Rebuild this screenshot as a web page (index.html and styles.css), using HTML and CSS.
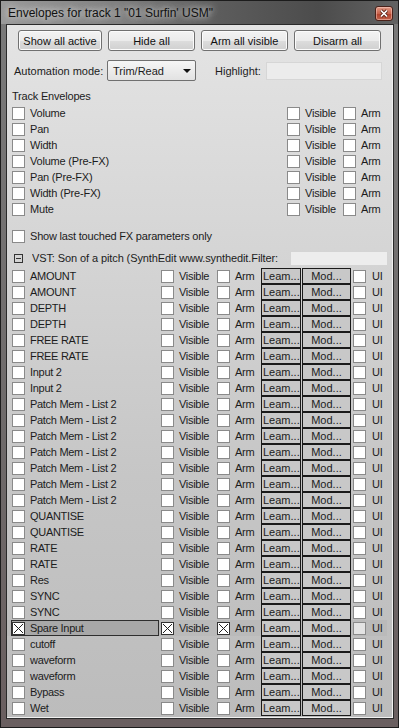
FILE: index.html
```html
<!DOCTYPE html>
<html lang="en">
<head>
    <meta charset="UTF-8">
    <title>Envelopes for track 1</title>
    <link rel="stylesheet" href="styles.css">
</head>
<body>
<div class="window">
    <div class="titlebar">
        <span class="title">Envelopes for track 1 "01 Surfin' USM"</span>
        <span class="close">
            <svg width="10" height="9" viewBox="0 0 10 9"><path d="M2 1.5 L8 7.5 M8 1.5 L2 7.5" stroke="#5a2418" stroke-width="3.2"/><path d="M2 1.5 L8 7.5 M8 1.5 L2 7.5" stroke="#fff" stroke-width="1.7"/></svg>
        </span>
    </div>
    <div class="client">
        <div class="btn-row">
            <button class="btn w84">Show all active</button>
            <button class="btn">Hide all</button>
            <button class="btn">Arm all visible</button>
            <button class="btn">Disarm all</button>
        </div>

        <div class="mode-row">
            <span class="mode-label">Automation mode:</span>
            <div class="select">Trim/Read<span class="arrow"></span></div>
            <span class="hl-label">Highlight:</span>
            <div class="hl-input"></div>
        </div>

        <div class="section-label">Track Envelopes</div>
        <div class="env-list">
            <div class="env-row"><span class="chk"><i class="cb"></i>Volume</span><span class="chk"><i class="cb"></i>Visible</span><span class="chk"><i class="cb"></i>Arm</span></div>
            <div class="env-row"><span class="chk"><i class="cb"></i>Pan</span><span class="chk"><i class="cb"></i>Visible</span><span class="chk"><i class="cb"></i>Arm</span></div>
            <div class="env-row"><span class="chk"><i class="cb"></i>Width</span><span class="chk"><i class="cb"></i>Visible</span><span class="chk"><i class="cb"></i>Arm</span></div>
            <div class="env-row"><span class="chk"><i class="cb"></i>Volume (Pre-FX)</span><span class="chk"><i class="cb"></i>Visible</span><span class="chk"><i class="cb"></i>Arm</span></div>
            <div class="env-row"><span class="chk"><i class="cb"></i>Pan (Pre-FX)</span><span class="chk"><i class="cb"></i>Visible</span><span class="chk"><i class="cb"></i>Arm</span></div>
            <div class="env-row"><span class="chk"><i class="cb"></i>Width (Pre-FX)</span><span class="chk"><i class="cb"></i>Visible</span><span class="chk"><i class="cb"></i>Arm</span></div>
            <div class="env-row"><span class="chk"><i class="cb"></i>Mute</span><span class="chk"><i class="cb"></i>Visible</span><span class="chk"><i class="cb"></i>Arm</span></div>
        </div>

        <div class="show-last"><span class="chk"><i class="cb"></i>Show last touched FX parameters only</span></div>

        <div class="vst-head">
            <span class="collapse"></span>
            <span class="vst-name">VST: Son of a pitch (SynthEdit www.synthedit.Filter:</span>
            <div class="filter"></div>
        </div>

        <div class="param-list">
            <div class="prow"><span class="pname"><i class="cb"></i>AMOUNT</span><span class="chk"><i class="cb"></i>Visible</span><span class="chk"><i class="cb"></i>Arm</span><span class="learn">Leam...</span><span class="mod">Mod...</span><span class="chk"><i class="cb"></i>UI</span></div>
            <div class="prow"><span class="pname"><i class="cb"></i>AMOUNT</span><span class="chk"><i class="cb"></i>Visible</span><span class="chk"><i class="cb"></i>Arm</span><span class="learn">Leam...</span><span class="mod">Mod...</span><span class="chk"><i class="cb"></i>UI</span></div>
            <div class="prow"><span class="pname"><i class="cb"></i>DEPTH</span><span class="chk"><i class="cb"></i>Visible</span><span class="chk"><i class="cb"></i>Arm</span><span class="learn">Leam...</span><span class="mod">Mod...</span><span class="chk"><i class="cb"></i>UI</span></div>
            <div class="prow"><span class="pname"><i class="cb"></i>DEPTH</span><span class="chk"><i class="cb"></i>Visible</span><span class="chk"><i class="cb"></i>Arm</span><span class="learn">Leam...</span><span class="mod">Mod...</span><span class="chk"><i class="cb"></i>UI</span></div>
            <div class="prow"><span class="pname"><i class="cb"></i>FREE RATE</span><span class="chk"><i class="cb"></i>Visible</span><span class="chk"><i class="cb"></i>Arm</span><span class="learn">Leam...</span><span class="mod">Mod...</span><span class="chk"><i class="cb"></i>UI</span></div>
            <div class="prow"><span class="pname"><i class="cb"></i>FREE RATE</span><span class="chk"><i class="cb"></i>Visible</span><span class="chk"><i class="cb"></i>Arm</span><span class="learn">Leam...</span><span class="mod">Mod...</span><span class="chk"><i class="cb"></i>UI</span></div>
            <div class="prow"><span class="pname"><i class="cb"></i>Input 2</span><span class="chk"><i class="cb"></i>Visible</span><span class="chk"><i class="cb"></i>Arm</span><span class="learn">Leam...</span><span class="mod">Mod...</span><span class="chk"><i class="cb"></i>UI</span></div>
            <div class="prow"><span class="pname"><i class="cb"></i>Input 2</span><span class="chk"><i class="cb"></i>Visible</span><span class="chk"><i class="cb"></i>Arm</span><span class="learn">Leam...</span><span class="mod">Mod...</span><span class="chk"><i class="cb"></i>UI</span></div>
            <div class="prow"><span class="pname"><i class="cb"></i>Patch Mem - List 2</span><span class="chk"><i class="cb"></i>Visible</span><span class="chk"><i class="cb"></i>Arm</span><span class="learn">Leam...</span><span class="mod">Mod...</span><span class="chk"><i class="cb"></i>UI</span></div>
            <div class="prow"><span class="pname"><i class="cb"></i>Patch Mem - List 2</span><span class="chk"><i class="cb"></i>Visible</span><span class="chk"><i class="cb"></i>Arm</span><span class="learn">Leam...</span><span class="mod">Mod...</span><span class="chk"><i class="cb"></i>UI</span></div>
            <div class="prow"><span class="pname"><i class="cb"></i>Patch Mem - List 2</span><span class="chk"><i class="cb"></i>Visible</span><span class="chk"><i class="cb"></i>Arm</span><span class="learn">Leam...</span><span class="mod">Mod...</span><span class="chk"><i class="cb"></i>UI</span></div>
            <div class="prow"><span class="pname"><i class="cb"></i>Patch Mem - List 2</span><span class="chk"><i class="cb"></i>Visible</span><span class="chk"><i class="cb"></i>Arm</span><span class="learn">Leam...</span><span class="mod">Mod...</span><span class="chk"><i class="cb"></i>UI</span></div>
            <div class="prow"><span class="pname"><i class="cb"></i>Patch Mem - List 2</span><span class="chk"><i class="cb"></i>Visible</span><span class="chk"><i class="cb"></i>Arm</span><span class="learn">Leam...</span><span class="mod">Mod...</span><span class="chk"><i class="cb"></i>UI</span></div>
            <div class="prow"><span class="pname"><i class="cb"></i>Patch Mem - List 2</span><span class="chk"><i class="cb"></i>Visible</span><span class="chk"><i class="cb"></i>Arm</span><span class="learn">Leam...</span><span class="mod">Mod...</span><span class="chk"><i class="cb"></i>UI</span></div>
            <div class="prow"><span class="pname"><i class="cb"></i>Patch Mem - List 2</span><span class="chk"><i class="cb"></i>Visible</span><span class="chk"><i class="cb"></i>Arm</span><span class="learn">Leam...</span><span class="mod">Mod...</span><span class="chk"><i class="cb"></i>UI</span></div>
            <div class="prow"><span class="pname"><i class="cb"></i>QUANTISE</span><span class="chk"><i class="cb"></i>Visible</span><span class="chk"><i class="cb"></i>Arm</span><span class="learn">Leam...</span><span class="mod">Mod...</span><span class="chk"><i class="cb"></i>UI</span></div>
            <div class="prow"><span class="pname"><i class="cb"></i>QUANTISE</span><span class="chk"><i class="cb"></i>Visible</span><span class="chk"><i class="cb"></i>Arm</span><span class="learn">Leam...</span><span class="mod">Mod...</span><span class="chk"><i class="cb"></i>UI</span></div>
            <div class="prow"><span class="pname"><i class="cb"></i>RATE</span><span class="chk"><i class="cb"></i>Visible</span><span class="chk"><i class="cb"></i>Arm</span><span class="learn">Leam...</span><span class="mod">Mod...</span><span class="chk"><i class="cb"></i>UI</span></div>
            <div class="prow"><span class="pname"><i class="cb"></i>RATE</span><span class="chk"><i class="cb"></i>Visible</span><span class="chk"><i class="cb"></i>Arm</span><span class="learn">Leam...</span><span class="mod">Mod...</span><span class="chk"><i class="cb"></i>UI</span></div>
            <div class="prow"><span class="pname"><i class="cb"></i>Res</span><span class="chk"><i class="cb"></i>Visible</span><span class="chk"><i class="cb"></i>Arm</span><span class="learn">Leam...</span><span class="mod">Mod...</span><span class="chk"><i class="cb"></i>UI</span></div>
            <div class="prow"><span class="pname"><i class="cb"></i>SYNC</span><span class="chk"><i class="cb"></i>Visible</span><span class="chk"><i class="cb"></i>Arm</span><span class="learn">Leam...</span><span class="mod">Mod...</span><span class="chk"><i class="cb"></i>UI</span></div>
            <div class="prow"><span class="pname"><i class="cb"></i>SYNC</span><span class="chk"><i class="cb"></i>Visible</span><span class="chk"><i class="cb"></i>Arm</span><span class="learn">Leam...</span><span class="mod">Mod...</span><span class="chk"><i class="cb"></i>UI</span></div>
            <div class="prow selected"><span class="pname"><i class="cb checked"></i>Spare Input</span><span class="chk"><i class="cb checked"></i>Visible</span><span class="chk"><i class="cb checked"></i>Arm</span><span class="learn">Leam...</span><span class="mod">Mod...</span><span class="chk"><i class="cb grey"></i>UI</span></div>
            <div class="prow"><span class="pname"><i class="cb"></i>cutoff</span><span class="chk"><i class="cb"></i>Visible</span><span class="chk"><i class="cb"></i>Arm</span><span class="learn">Leam...</span><span class="mod">Mod...</span><span class="chk"><i class="cb"></i>UI</span></div>
            <div class="prow"><span class="pname"><i class="cb"></i>waveform</span><span class="chk"><i class="cb"></i>Visible</span><span class="chk"><i class="cb"></i>Arm</span><span class="learn">Leam...</span><span class="mod">Mod...</span><span class="chk"><i class="cb"></i>UI</span></div>
            <div class="prow"><span class="pname"><i class="cb"></i>waveform</span><span class="chk"><i class="cb"></i>Visible</span><span class="chk"><i class="cb"></i>Arm</span><span class="learn">Leam...</span><span class="mod">Mod...</span><span class="chk"><i class="cb"></i>UI</span></div>
            <div class="prow"><span class="pname"><i class="cb"></i>Bypass</span><span class="chk"><i class="cb"></i>Visible</span><span class="chk"><i class="cb"></i>Arm</span><span class="learn">Leam...</span><span class="mod">Mod...</span><span class="chk"><i class="cb"></i>UI</span></div>
            <div class="prow"><span class="pname"><i class="cb"></i>Wet</span><span class="chk"><i class="cb"></i>Visible</span><span class="chk"><i class="cb"></i>Arm</span><span class="learn">Leam...</span><span class="mod">Mod...</span><span class="chk"><i class="cb"></i>UI</span></div>
        </div>
    </div>
</div>
</body>
</html>
```

FILE: styles.css
```css
body { margin: 0; background: #1a1a1a; font-family: "Liberation Sans", Arial, sans-serif; font-size: 11px; color: #1c1c1c; }

.window { width: 399px; height: 728px; box-sizing: border-box; border: 1px solid #1c1c1c; padding: 0 4px 8px 5px; display: flex; flex-direction: column; background: linear-gradient(#7a7a7a, #6e6a6a 60%, #6a5f60); }

.titlebar { height: 23px; margin: 0 -4px 0 -5px; padding-left: 7px; display: flex; align-items: center; justify-content: space-between; background: linear-gradient(to right, #9a9a9a, #858585 25%, #5c5c5c 55%, #4c4c4c 80%, #626262); }
.title { font-size: 12px; color: #111; text-shadow: 0 0 6px rgba(235,235,235,.9), 0 0 10px rgba(235,235,235,.6); }
.close { width: 18px; height: 15px; box-sizing: border-box; margin: 2px 5px 0 0; border: 1px solid #4a2119; border-radius: 3px; display: flex; align-items: center; justify-content: center; background: linear-gradient(#e29a86, #c8624b 50%, #b2412b 51%, #c0614a); box-shadow: inset 0 0 0 1px rgba(255,220,210,.45); }

.client { flex: 1; border: 1px solid #2a2a2a; background: linear-gradient(#e4e4e4, #d6d6d6 30%, #c6c6c6 65%, #bcbcbc); box-shadow: inset -1px -1px 0 #f0f0f0; overflow: hidden; }

/* top buttons */
.btn-row { display: flex; gap: 6px; margin: 5px 0 0 11px; }
.btn { width: 87px; height: 21px; padding: 0; font: inherit; color: #111; border: 1px solid #707070; border-radius: 3px; background: linear-gradient(#f3f3f3, #ebebeb 50%, #dddddd 51%, #d0d0d0); box-shadow: inset 0 0 0 1px #fbfbfb; }
.btn.w84 { width: 84px; }

.mode-row { display: flex; align-items: center; height: 21px; margin: 9px 0 0 7px; }
.mode-label { width: 93px; }
.select { width: 89px; height: 21px; box-sizing: border-box; border: 1px solid #707070; border-radius: 2px; padding-left: 5px; display: flex; align-items: center; justify-content: space-between; background: linear-gradient(#f6f6f6, #ececec 50%, #e2e2e2); }
.arrow { width: 0; height: 0; margin-right: 4px; border-left: 4px solid transparent; border-right: 4px solid transparent; border-top: 4px solid #111; }
.hl-label { width: 51px; margin-left: 19px; }
.hl-input { width: 116px; height: 18px; box-sizing: border-box; border: 1px solid #d6d6d6; background: #ececec; }

.section-label { height: 16px; line-height: 16px; margin: 7px 0 0 5px; letter-spacing: -0.2px; }

/* check + label */
.chk { display: flex; align-items: center; gap: 5px; white-space: nowrap; }
.cb { display: block; flex: none; width: 13px; height: 13px; box-sizing: border-box; border: 1px solid #8a8a8a; background: #fff; }
.cb.checked { background: #fff url("data:image/svg+xml,%3Csvg xmlns='http://www.w3.org/2000/svg' width='11' height='11'%3E%3Cpath d='M1 1L10 10M10 1L1 10' stroke='%23222' stroke-width='1'/%3E%3C/svg%3E") no-repeat center; border-color: #333; }
.cb.grey { background: #e3e3e3; }

.env-list { margin: 1px 0 0 5px; }
.env-row { display: grid; grid-template-columns: 275px 56px auto; height: 16px; align-items: center; letter-spacing: -0.2px; }

.show-last { height: 16px; display: flex; margin: 11px 0 0 5px; letter-spacing: -0.2px; }

.vst-head { display: flex; align-items: center; height: 16px; margin: 6px 0 0 7px; }
.collapse { width: 9px; height: 9px; box-sizing: border-box; border: 1px solid #333; margin-right: 9px; background: linear-gradient(#333, #333) no-repeat center / 5px 1px; }
.vst-name { width: 258px; white-space: nowrap; overflow: hidden; letter-spacing: -0.1px; }
.filter { width: 98px; height: 15px; box-sizing: border-box; border: 1px solid #d4d4d4; background: #ededed; }

/* parameter list */
.param-list { margin-top: 2px; }
.prow { display: grid; grid-template-columns: 150px 56px 44px 41px 51px auto; height: 16px; align-items: center; padding-left: 4px; width: 376px; letter-spacing: -0.3px; }
.pname { display: flex; align-items: center; gap: 5px; width: 148px; height: 16px; box-sizing: border-box; padding-left: 1px; white-space: nowrap; }
.learn, .mod { height: 16px; box-sizing: border-box; border: 1px solid #1a1a1a; background: #c8c8c8; line-height: 14px; letter-spacing: 0; }
.learn { width: 40px; padding-left: 1px; }
.mod { width: 49px; text-align: center; }
.prow .chk:last-child { gap: 6px; }

.prow.selected { background: #bababa; }
.prow.selected .pname { border: 1px solid #2e2e2e; background: #a8a8a8; padding-left: 0; }
```
